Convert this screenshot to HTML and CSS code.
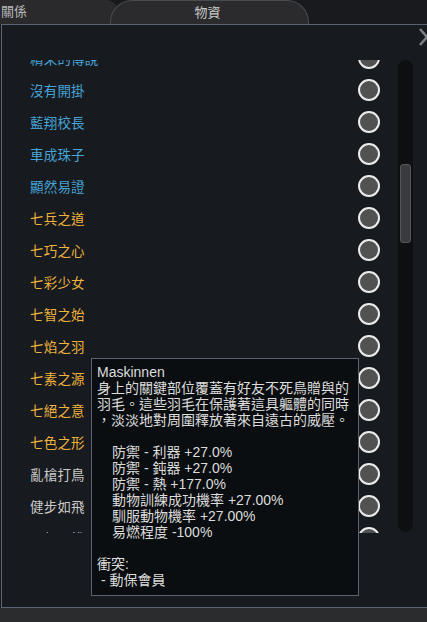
FILE: index.html
```html
<!DOCTYPE html>
<html lang="zh-Hant">
<head>
  <meta charset="UTF-8" />
  <title>物資</title>
  <link rel="stylesheet" href="styles.css">
</head>
<body>
  <div class="tabs">
    <div class="tab tab-side">關係</div>
    <div class="tab tab-active">物資</div>
  </div>

  <div class="panel">
    <svg class="close" width="16" height="18" viewBox="0 0 16 18">
      <path d="M1 1 L15 17 M1 17 L15 1" stroke="#7c7e82" stroke-width="2.6" fill="none" />
    </svg>

    <div class="panel-body">
      <div class="list-view">
        <ul class="trait-list">
          <li class="row blue"><span>精采的傳說</span><i class="dot"></i></li>
          <li class="row blue"><span>沒有開掛</span><i class="dot"></i></li>
          <li class="row blue"><span>藍翔校長</span><i class="dot"></i></li>
          <li class="row blue"><span>車成珠子</span><i class="dot"></i></li>
          <li class="row blue"><span>顯然易證</span><i class="dot"></i></li>
          <li class="row gold"><span>七兵之道</span><i class="dot"></i></li>
          <li class="row gold"><span>七巧之心</span><i class="dot"></i></li>
          <li class="row gold"><span>七彩少女</span><i class="dot"></i></li>
          <li class="row gold"><span>七智之始</span><i class="dot"></i></li>
          <li class="row gold"><span>七焰之羽</span><i class="dot"></i></li>
          <li class="row gold"><span>七素之源</span><i class="dot"></i></li>
          <li class="row gold"><span>七絕之意</span><i class="dot"></i></li>
          <li class="row gold"><span>七色之形</span><i class="dot"></i></li>
          <li class="row plain"><span>亂槍打鳥</span><i class="dot"></i></li>
          <li class="row plain"><span>健步如飛</span><i class="dot"></i></li>
          <li class="row plain"><span>堅韌不拔</span><i class="dot"></i></li>
        </ul>
      </div>

      <div class="scroll-track">
        <div class="scroll-thumb"></div>
      </div>
    </div>
  </div>

  <div class="footer"></div>

  <!-- 滑鼠懸停提示 -->
  <div class="tooltip">
    <div>Maskinnen</div>
    <div>身上的關鍵部位覆蓋有好友不死鳥贈與的</div>
    <div>羽毛。這些羽毛在保護著這具軀體的同時</div>
    <div>，淡淡地對周圍釋放著來自遠古的威壓。</div>
    <div class="blank"></div>
    <div class="stat">防禦 - 利器 +27.0%</div>
    <div class="stat">防禦 - 鈍器 +27.0%</div>
    <div class="stat">防禦 - 熱 +177.0%</div>
    <div class="stat">動物訓練成功機率 +27.00%</div>
    <div class="stat">馴服動物機率 +27.00%</div>
    <div class="stat">易燃程度 -100%</div>
    <div class="blank"></div>
    <div>衝突:</div>
    <div class="conflict">- 動保會員</div>
  </div>
</body>
</html>
```

FILE: styles.css
```css
/* 公用樣式 */
* {
  box-sizing: border-box;
  margin: 0;
  padding: 0;
}
body {
  width: 427px;
  height: 622px;
  overflow: hidden;
  background-color: #181a1e;
  font-family: "Liberation Sans", "Noto Sans CJK TC", sans-serif;
  font-size: 13.5px;
  position: relative;
}

/* 分頁標籤 */
.tabs {
  height: 24px;
  display: flex;
  background-color: #181a1e;
}
.tab {
  height: 24px;
  line-height: 23px;
  font-size: 13px;
  color: #b8b8b8;
}
.tab-side {
  width: 118px;
  padding-left: 1px;
  background-color: #2a2a2c;
  border-top-right-radius: 12px;
}
.tab-active {
  width: 199px;
  margin-left: -8px;
  padding-right: 4px;
  text-align: center;
  color: #c8c8c8;
  background-color: #2b2b2d;
  border: 1px solid #4a4b4e;
  border-bottom: none;
  border-radius: 22px 22px 0 0;
}

/* 主面板 */
.panel {
  position: relative;
  margin-left: 1px;
  height: 584px;
  background-color: #171a1f;
  border: 1px solid #5b6472;
  border-right: none;
}
.close {
  position: absolute;
  top: 3px;
  left: 417px;
}
.panel-body {
  display: flex;
  padding-top: 35px;
}

/* 清單 */
.list-view {
  width: 382px;
  height: 473px;
  overflow: hidden;
}
.trait-list {
  list-style: none;
  margin-top: -18px;
}
.row {
  height: 32px;
  display: flex;
  align-items: center;
  justify-content: space-between;
  padding-left: 28px;
  padding-right: 4px;
}
.row span {
  letter-spacing: 0.2px;
}
.blue { color: #47a4d6; }
.gold { color: #eeb33d; }
.plain { color: #c9c9c9; }
.dot {
  width: 22px;
  height: 22px;
  border-radius: 50%;
  background-color: #525252;
  border: 2px solid #ececec;
}

/* 捲軸 */
.scroll-track {
  width: 15px;
  height: 472px;
  margin-left: 14px;
  padding: 104px 2px 0;
  background-color: #0e0f11;
  border-radius: 8px;
}
.scroll-thumb {
  height: 79px;
  background-color: #3a3b3e;
  border: 1px solid #55575a;
  border-radius: 3px;
}

.footer {
  height: 14px;
  background-color: #2b2c2e;
}

/* 提示框 */
.tooltip {
  position: absolute;
  left: 91px;
  top: 358px;
  width: 268px;
  height: 238px;
  padding: 5px 5px 0 5px;
  background-color: #0b0e10;
  border: 1px solid #5b6270;
  color: #dcdcdc;
  font-size: 14px;
  line-height: 16px;
  white-space: nowrap;
}
.tooltip .blank {
  height: 16px;
}
.tooltip .stat {
  padding-left: 15px;
}
.tooltip .conflict {
  padding-left: 4px;
}
```
